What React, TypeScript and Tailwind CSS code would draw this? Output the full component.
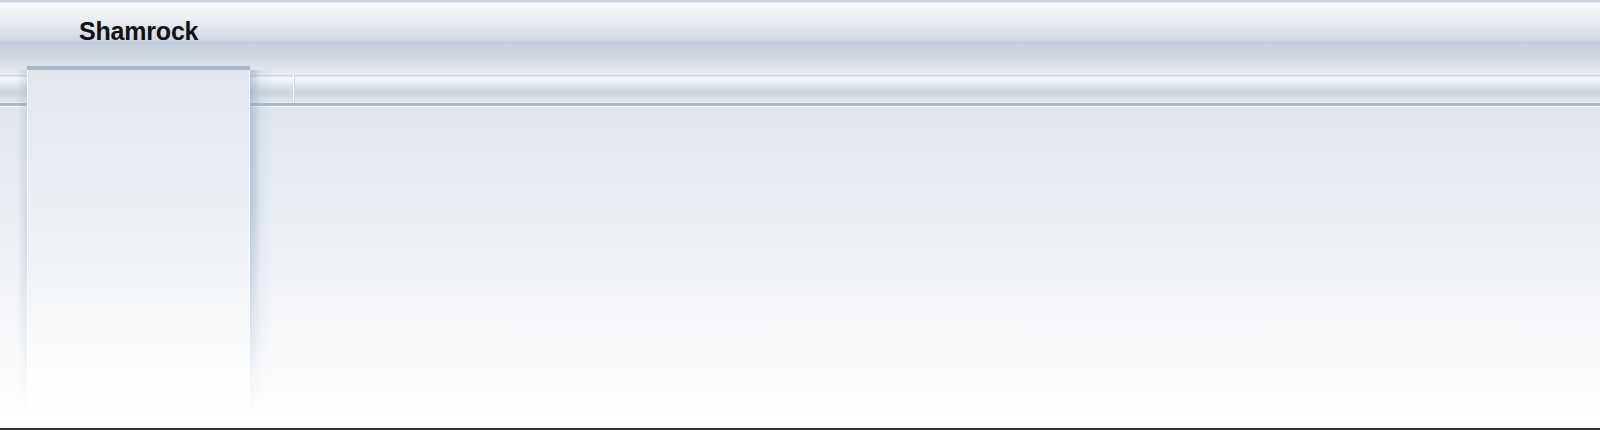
import React from "react";

export default function App() {
  return (
    <div className="relative w-[1600px] h-[430px] overflow-hidden flex flex-col bg-white" style={{ fontFamily: '"Liberation Sans", Arial, sans-serif' }}>
      {/* header */}
      <div className="h-[75px] shrink-0 bg-[linear-gradient(to_bottom,#c6d2de_0px,#c6d2de_2px,#f8fafc_3px,#e9eef3_20px,#d0d9e2_40px,#c2ceda_42px,#d0d9e2_58px,#e6ebf1_74px)] flex items-start">
        <div className="ml-[79px] mt-[17px] text-[25px] leading-[28px] font-bold text-[#111] tracking-[-0.2px]">Shamrock</div>
      </div>
      {/* tab bar */}
      <div className="h-[32px] shrink-0 flex bg-[linear-gradient(to_bottom,#c8d3de_0px,#c8d3de_1px,#f1f4f7_2px,#f6f8fa_4px,#d8e0e8_12px,#c9d4de_18px,#dfe6ec_26px,#e6ebf0_28px,#a9b9c9_28px,#a9b9c9_31px,#ffffff_31px)]">
        <div className="w-[293px]" />
        <div className="w-[2px] h-[28px] bg-[#ccd6df] border-l border-white" />
      </div>
      {/* body */}
      <div className="flex-1 bg-[linear-gradient(to_bottom,#e1e6ee,#f3f5f8_60%,#ffffff_95%)]" />
      <div className="h-[2px] shrink-0 bg-[#333]" />

      {/* active tab panel */}
      <div className="absolute left-[27px] top-[66px] w-[223px] h-[350px] flex flex-col">
        <div className="h-[4px] bg-[#a8b9ca]" />
        <div className="flex-1 border-x border-white bg-[linear-gradient(to_bottom,#e2e7ef,#f0f3f7_55%,#fcfdfd_85%,#ffffff)]" />
      </div>
      {/* right shadow */}
      <div className="absolute left-[250px] top-[70px] w-[22px] h-[345px] bg-[linear-gradient(to_right,rgba(140,164,190,0.55),rgba(170,190,210,0.2)_45%,rgba(255,255,255,0))] [mask-image:linear-gradient(to_bottom,black,black_40%,transparent)]" />
      {/* left shadow */}
      <div className="absolute left-[17px] top-[70px] w-[10px] h-[345px] bg-[linear-gradient(to_left,rgba(150,170,195,0.3),rgba(255,255,255,0))] [mask-image:linear-gradient(to_bottom,black,black_50%,transparent)]" />
    </div>
  );
}
